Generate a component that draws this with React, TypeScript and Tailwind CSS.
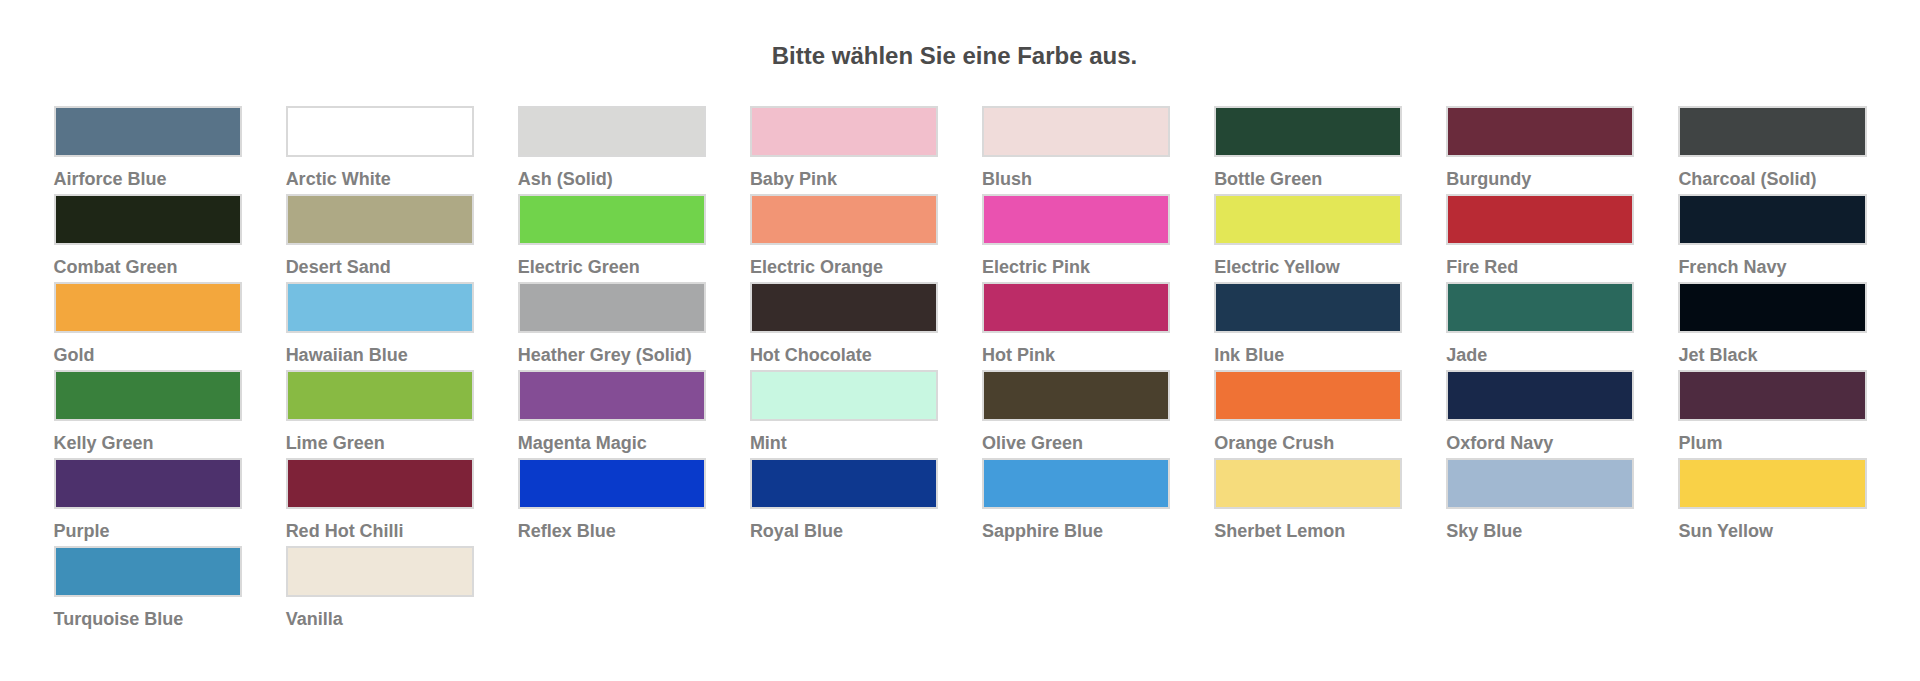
const colours: { name: string; hex: string }[] = [
  { name: "Airforce Blue", hex: "#587388" },
  { name: "Arctic White", hex: "#ffffff" },
  { name: "Ash (Solid)", hex: "#d9d9d7" },
  { name: "Baby Pink", hex: "#f2bfcc" },
  { name: "Blush", hex: "#f0dcda" },
  { name: "Bottle Green", hex: "#234734" },
  { name: "Burgundy", hex: "#6a2b3c" },
  { name: "Charcoal (Solid)", hex: "#404444" },
  { name: "Combat Green", hex: "#1e2616" },
  { name: "Desert Sand", hex: "#aea985" },
  { name: "Electric Green", hex: "#71d34b" },
  { name: "Electric Orange", hex: "#f29575" },
  { name: "Electric Pink", hex: "#ea52b0" },
  { name: "Electric Yellow", hex: "#e3e756" },
  { name: "Fire Red", hex: "#b92a34" },
  { name: "French Navy", hex: "#0d1c2b" },
  { name: "Gold", hex: "#f3a73d" },
  { name: "Hawaiian Blue", hex: "#74bfe2" },
  { name: "Heather Grey (Solid)", hex: "#a7a8a9" },
  { name: "Hot Chocolate", hex: "#362b29" },
  { name: "Hot Pink", hex: "#bc2c67" },
  { name: "Ink Blue", hex: "#1d3852" },
  { name: "Jade", hex: "#2a685c" },
  { name: "Jet Black", hex: "#020a12" },
  { name: "Kelly Green", hex: "#39803c" },
  { name: "Lime Green", hex: "#88ba43" },
  { name: "Magenta Magic", hex: "#844d95" },
  { name: "Mint", hex: "#c8f7e1" },
  { name: "Olive Green", hex: "#4a402d" },
  { name: "Orange Crush", hex: "#ef7235" },
  { name: "Oxford Navy", hex: "#18284a" },
  { name: "Plum", hex: "#4e2b40" },
  { name: "Purple", hex: "#4d316c" },
  { name: "Red Hot Chilli", hex: "#7e2238" },
  { name: "Reflex Blue", hex: "#093acb" },
  { name: "Royal Blue", hex: "#0e388f" },
  { name: "Sapphire Blue", hex: "#439cdb" },
  { name: "Sherbet Lemon", hex: "#f6dc7c" },
  { name: "Sky Blue", hex: "#a1b8d1" },
  { name: "Sun Yellow", hex: "#f9d147" },
  { name: "Turquoise Blue", hex: "#3e8fb9" },
  { name: "Vanilla", hex: "#efe7d9" },
]

const Swatch = ({ name, hex }: { name: string; hex: string }) => (
  <button type="button" className="flex flex-col text-left cursor-pointer">
    {/* swatch fill is data driven, so it goes inline */}
    <span className="block h-[51px] w-full border-2 border-[#d9d9d9]" style={{ backgroundColor: hex }} />
    <span className="mt-3 text-[18px] leading-[20px] font-bold text-[#808080] whitespace-nowrap">{name}</span>
  </button>
)

export default function App() {
  return (
    <div className="min-h-[681px] bg-white font-['Liberation_Sans',Arial,sans-serif]">
      <h2 className="pt-[42px] pr-[11px] text-center text-[24px] leading-[28px] font-bold text-[#4b4b4b]">
        Bitte wählen Sie eine Farbe aus.
      </h2>
      <div className="mx-auto mt-[36px] grid w-[1813px] grid-cols-8 gap-x-[44px] gap-y-[5px]">
        {colours.map((c) => (
          <Swatch key={c.name} name={c.name} hex={c.hex} />
        ))}
      </div>
    </div>
  )
}
